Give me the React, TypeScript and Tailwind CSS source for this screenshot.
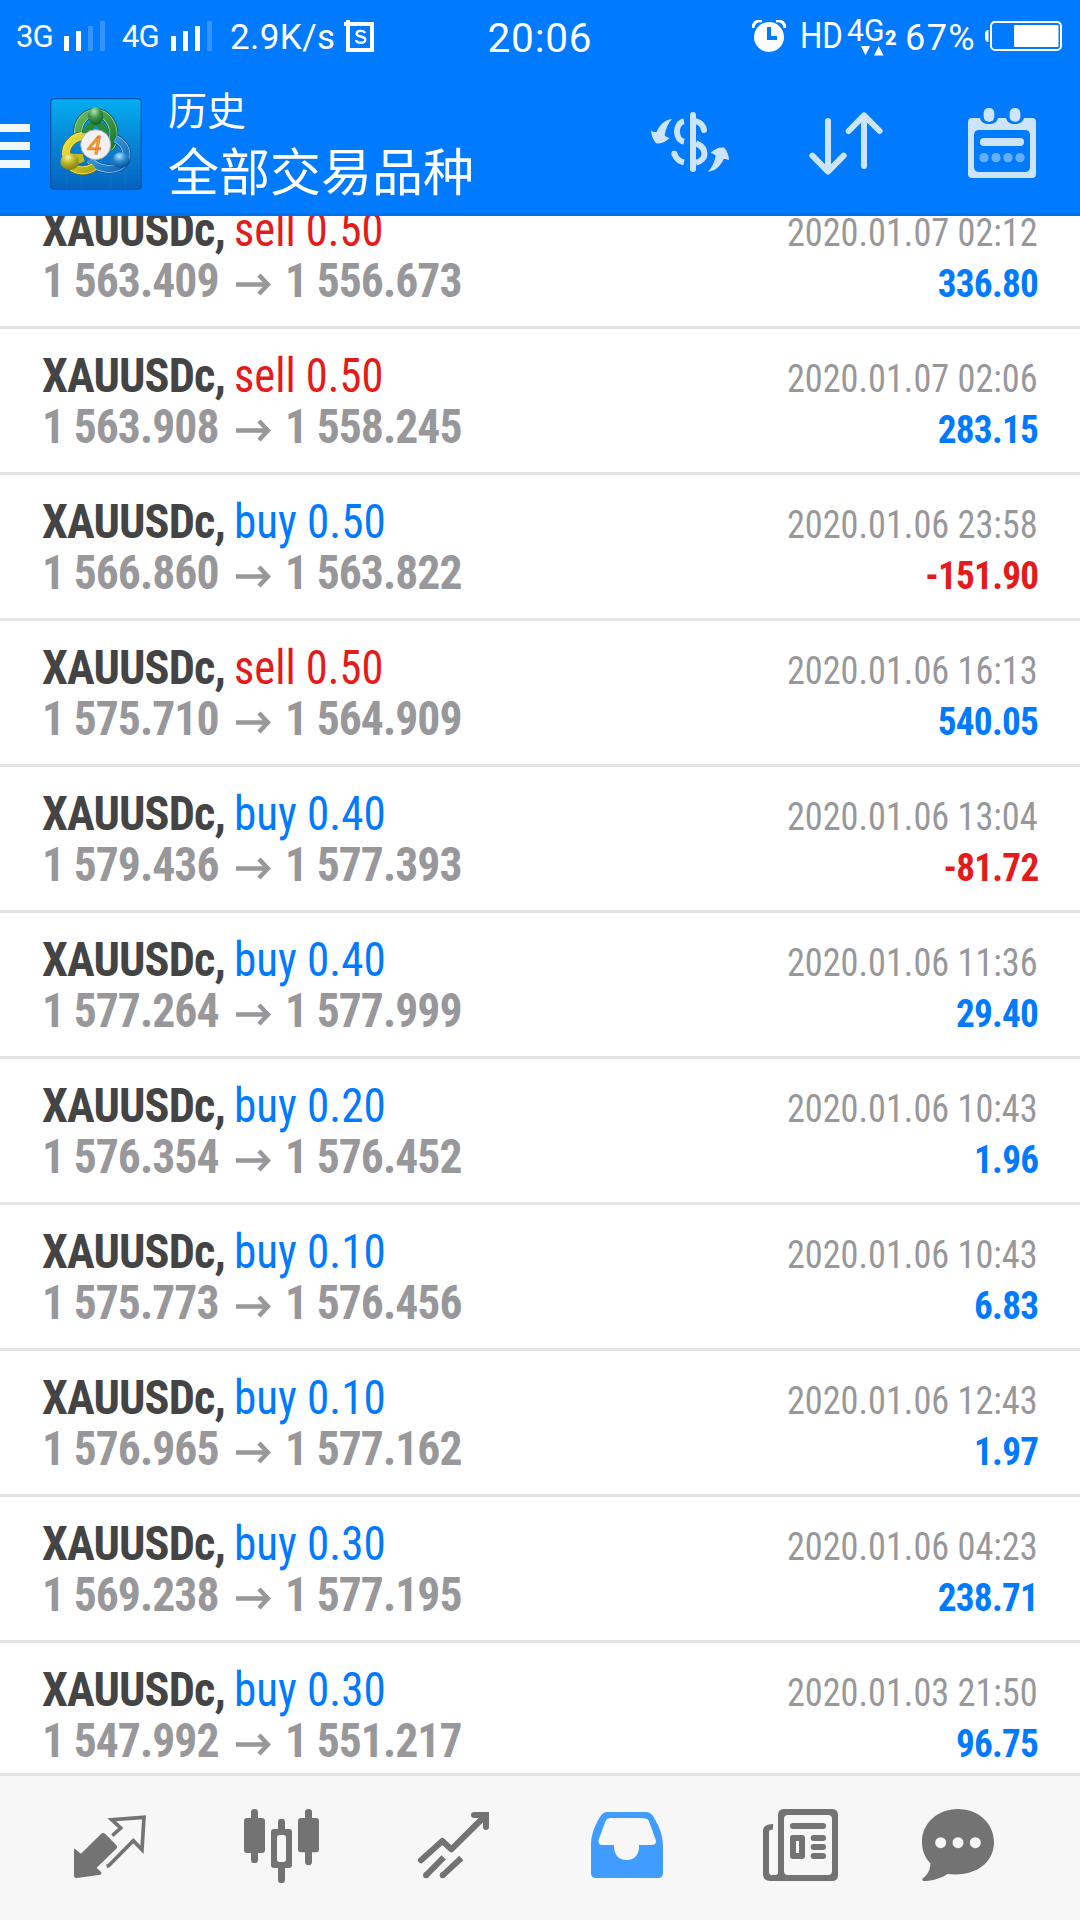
import type { ReactNode } from 'react'

type Deal = {
  type: 'buy' | 'sell'
  volume: string
  open: string
  close: string
  time: string
  profit: string
}

const deals: Deal[] = [
  { type: 'sell', volume: '0.50', open: '1 563.409', close: '1 556.673', time: '2020.01.07 02:12', profit: '336.80' },
  { type: 'sell', volume: '0.50', open: '1 563.908', close: '1 558.245', time: '2020.01.07 02:06', profit: '283.15' },
  { type: 'buy', volume: '0.50', open: '1 566.860', close: '1 563.822', time: '2020.01.06 23:58', profit: '-151.90' },
  { type: 'sell', volume: '0.50', open: '1 575.710', close: '1 564.909', time: '2020.01.06 16:13', profit: '540.05' },
  { type: 'buy', volume: '0.40', open: '1 579.436', close: '1 577.393', time: '2020.01.06 13:04', profit: '-81.72' },
  { type: 'buy', volume: '0.40', open: '1 577.264', close: '1 577.999', time: '2020.01.06 11:36', profit: '29.40' },
  { type: 'buy', volume: '0.20', open: '1 576.354', close: '1 576.452', time: '2020.01.06 10:43', profit: '1.96' },
  { type: 'buy', volume: '0.10', open: '1 575.773', close: '1 576.456', time: '2020.01.06 10:43', profit: '6.83' },
  { type: 'buy', volume: '0.10', open: '1 576.965', close: '1 577.162', time: '2020.01.06 12:43', profit: '1.97' },
  { type: 'buy', volume: '0.30', open: '1 569.238', close: '1 577.195', time: '2020.01.06 04:23', profit: '238.71' },
  { type: 'buy', volume: '0.30', open: '1 547.992', close: '1 551.217', time: '2020.01.03 21:50', profit: '96.75' }
]

const Signal = ({ level }: { level: number }) => (
  <svg width="42" height="30" viewBox="0 0 42 30" fill="#fff">
    {[0, 1, 2, 3].map((i) => (
      <rect key={i} x={i * 12} y={15 - i * 5} width="5" height={15 + i * 5} opacity={i < level ? 1 : 0.2} />
    ))}
  </svg>
)

const StatusBar = () => (
  <div className="grid h-[72px] grid-cols-[1fr_auto_1fr] items-center text-white whitespace-nowrap">
    <div className="flex items-center pl-[16px]">
      <span className="w-[48px] text-[31px] leading-none tracking-[-1px]">3G</span>
      <Signal level={2} />
      <span className="ml-[16px] w-[49px] text-[31px] leading-none tracking-[-1px]">4G</span>
      <Signal level={3} />
      <span className="ml-[17px] w-[114px] pt-[3px] text-[35px] leading-none tracking-[0.4px]">2.9K/s</span>
      <svg width="30" height="32" viewBox="0 0 90 96" fill="none" stroke="#fff">
        <path d="M12 12H84V90H12Z" strokeWidth="12" />
        <path d="M0 12H18M12 0V14" strokeWidth="12" />
        <path d="M63 39C60 31 38 30 38 41C38 53 64 46 64 59C64 72 38 70 36 60" strokeWidth="7" />
      </svg>
    </div>
    <span className="pt-[4px] text-[40.5px] leading-none tracking-[0.8px]">20:06</span>
    <div className="flex items-center justify-end pr-[18px]">
      <svg width="34" height="32" viewBox="0 0 34 32">
        <circle cx="17" cy="17" r="15" fill="#fff" />
        <path d="M1 8C1 3 5 0 10 1M24 1C29 0 33 3 33 8" stroke="#fff" strokeWidth="3" fill="none" />
        <path d="M17 7V18H25" stroke="#007aff" strokeWidth="4" fill="none" />
      </svg>
      <span className="ml-[14px] w-[47px] text-[36px] leading-none">
        <span className="inline-block origin-left scale-x-[0.87]">HD</span>
      </span>
      <div className="relative h-[56px] w-[50px]">
        <span className="inline-block origin-left scale-x-[0.94] pt-[6px] text-[32px] leading-none">4G</span>
        <span className="absolute top-[20px] left-[38px] text-[20px] leading-none font-black">2</span>
        <svg className="absolute top-[38px] left-[14px]" width="23" height="10" viewBox="0 0 23 10" fill="#fff">
          <path d="M0 0H9L4.5 9.500ZM13 9.500H22.500L17.750 0Z" />
        </svg>
      </div>
      <span className="ml-[8px] w-[80px] pt-[3px] text-[36px] leading-none tracking-[1.4px]">67%</span>
      <svg width="77" height="30" viewBox="0 0 77 30">
        <rect x="6" y="1" width="70" height="28" rx="4" fill="none" stroke="#fff" strokeWidth="2" />
        <path d="M3.500 9V21C1 21 0 19 0 17V13C0 11 1 9 3.500 9Z" fill="#fff" />
        <rect x="29" y="4" width="44.500" height="22" rx="1" fill="#fff" />
      </svg>
    </div>
  </div>
)

const AppLogo = () => (
  <svg className="ml-[20px] shrink-0" width="92" height="92" viewBox="0 0 276 276">
    <defs>
      <linearGradient id="tile" x1="0" y1="0" x2="0" y2="1">
        <stop offset="0" stopColor="#03aef2" />
        <stop offset="0.5" stopColor="#0784d6" />
        <stop offset="1" stopColor="#0563bd" />
      </linearGradient>
      <linearGradient id="green" x1="0" y1="0" x2="1" y2="1">
        <stop offset="0" stopColor="#68b868" />
        <stop offset="1" stopColor="#1c7a2c" />
      </linearGradient>
      <linearGradient id="yellow" x1="0" y1="0" x2="1" y2="1">
        <stop offset="0" stopColor="#f0e53c" />
        <stop offset="1" stopColor="#a9a411" />
      </linearGradient>
      <linearGradient id="blue" x1="0" y1="0" x2="1" y2="1">
        <stop offset="0" stopColor="#4fb2ea" />
        <stop offset="1" stopColor="#0b62b4" />
      </linearGradient>
      <radialGradient id="greenHead" cx="0.4" cy="0.25" r="0.8">
        <stop offset="0" stopColor="#b5e3b5" />
        <stop offset="0.45" stopColor="#3f9b4c" />
        <stop offset="1" stopColor="#0e5c22" />
      </radialGradient>
      <radialGradient id="yellowHead" cx="0.4" cy="0.25" r="0.8">
        <stop offset="0" stopColor="#f3f0a0" />
        <stop offset="0.45" stopColor="#bcb624" />
        <stop offset="1" stopColor="#77740a" />
      </radialGradient>
      <radialGradient id="blueHead" cx="0.4" cy="0.25" r="0.8">
        <stop offset="0" stopColor="#b4e2fb" />
        <stop offset="0.45" stopColor="#2a8cd4" />
        <stop offset="1" stopColor="#07468c" />
      </radialGradient>
    </defs>
    <rect x="2" y="2" width="272" height="272" rx="12" fill="url(#tile)" stroke="#0558a8" strokeWidth="4" />
    <path d="M50 4V272M94 4V272M182 4V272M226 4V272M4 50H272M4 226H272" stroke="#3fb4f0" strokeWidth="2" opacity="0.15" />
    <path d="M84 110C82 72 105 45 137 45C172 45 194 82 190 120C188 137 184 143 178 148" fill="none" stroke="#0c5a2a" strokeWidth="29" />
    <path d="M84 110C82 72 105 45 137 45C172 45 194 82 190 120C188 137 184 143 178 148" fill="none" stroke="#b2e2ac" strokeWidth="24" />
    <path d="M84 110C82 72 105 45 137 45C172 45 194 82 190 120C188 137 184 143 178 148" fill="none" stroke="url(#green)" strokeWidth="20" />
    <path d="M196 122C221 134 233 156 228 180C223 204 196 216 168 212C147 209 128 200 120 186" fill="none" stroke="#0a4f93" strokeWidth="28" />
    <path d="M196 122C221 134 233 156 228 180C223 204 196 216 168 212C147 209 128 200 120 186" fill="none" stroke="#94d2f6" strokeWidth="23" />
    <path d="M196 122C221 134 233 156 228 180C223 204 196 216 168 212C147 209 128 200 120 186" fill="none" stroke="url(#blue)" strokeWidth="19" />
    <path d="M108 112C72 114 47 138 48 168C49 196 67 216 96 217C113 217 124 212 132 206" fill="none" stroke="#777509" strokeWidth="28" />
    <path d="M108 112C72 114 47 138 48 168C49 196 67 216 96 217C113 217 124 212 132 206" fill="none" stroke="#f5f08c" strokeWidth="23" />
    <path d="M108 112C72 114 47 138 48 168C49 196 67 216 96 217C113 217 124 212 132 206" fill="none" stroke="url(#yellow)" strokeWidth="19" />
    <path d="M113 75L95 106H122L137 82L154 104H178L162 75Z" fill="#2a8a3c" />
    <path d="M66 168H98L104 190L76 202Z" fill="#c0b91f" />
    <path d="M186 174L214 168L222 200L178 198Z" fill="#1873c0" />
    <ellipse cx="137" cy="54" rx="23" ry="27" fill="url(#greenHead)" />
    <ellipse cx="59" cy="191" rx="28" ry="25" fill="url(#yellowHead)" />
    <ellipse cx="213" cy="186" rx="26" ry="23" fill="url(#blueHead)" />
    <circle cx="137" cy="140" r="45" fill="#f1f1f4" stroke="#a9a9ad" strokeWidth="3" />
    <text x="134" y="167" textAnchor="middle" fontFamily="Roboto" fontSize="78" fontStyle="italic" fill="#f7a63c" stroke="#e8801f" strokeWidth="2.5">
      4
    </text>
  </svg>
)

const Header = () => (
  <div className="flex h-[144px] items-start border-b-[3px] border-[#0070e6] text-white">
    <div className="mt-[52px] flex w-[30px] shrink-0 flex-col gap-[10px]">
      <div className="h-[8px] bg-[#f0f7ff]" />
      <div className="h-[8px] bg-[#f0f7ff]" />
      <div className="h-[8px] bg-[#f0f7ff]" />
    </div>
    <div className="mt-[26px]">
      <AppLogo />
    </div>
    <div className="mt-[11px] ml-[26px] flex-1 whitespace-nowrap">
      <div className="text-[39px] leading-[58px]">历史</div>
      <div className="text-[51px] leading-[66px]">全部交易品种</div>
    </div>
    <svg className="mt-[40px]" width="80" height="60" viewBox="90 96 240 180">
      <g fill="none" stroke="#cce4ff" strokeWidth="18">
        <path d="M219 105V267" strokeLinecap="round" />
        <path d="M192 124C164 129 164 180 192 185" />
        <path d="M228 124C240 127 250 136 252 150" strokeLinecap="round" />
        <path d="M228 190C262 203 262 240 228 248" />
        <path d="M164 222C168 236 178 244 192 247" />
        <path d="M163 221V222" strokeLinecap="round" />
      </g>
      <path d="M156 117C135 119 119 134 110 156C104 157 98 155 93 152C94 166 99 179 108 190C121 192 135 187 149 174C142 173 137 170 134 166C137 147 144 130 156 117Z" fill="#cce4ff" />
      <path d="M264 275C285 273 301 260 311 237C317 236 322 238 327 241C327 227 322 214 313 203C299 200 284 206 271 219C278 220 283 223 287 227C284 246 276 262 264 275Z" fill="#cce4ff" />
    </svg>
    <svg className="mt-[40px] ml-[79px]" width="74" height="63" viewBox="567 96 222 189">
      <path
        d="M624 123V274M577 227L624 275L671 227M732 258V107M686 153L732 106L779 153"
        fill="none"
        stroke="#cce4ff"
        strokeWidth="18"
        strokeLinecap="round"
        strokeLinejoin="round"
      />
    </svg>
    <svg className="mt-[36px] mr-[44px] ml-[85px]" width="68" height="70" viewBox="1044 84 204 210">
      <path
        fillRule="evenodd"
        fill="#cce4ff"
        d="M1056 114H1080C1083 126 1092 132 1107 132C1122 132 1131 126 1134 114H1158C1161 126 1170 132 1185 132C1200 132 1209 126 1212 114H1236Q1248 114 1248 126V282Q1248 294 1236 294H1056Q1044 294 1044 282V126Q1044 114 1056 114ZM1078 150Q1062 150 1062 166V260Q1062 276 1078 276H1214Q1230 276 1230 260V166Q1230 150 1214 150Z"
      />
      <rect x="1091" y="84" width="32" height="41" rx="15" fill="#cce4ff" />
      <rect x="1169" y="84" width="32" height="41" rx="15" fill="#cce4ff" />
      <rect x="1080" y="174" width="132" height="24" rx="11" fill="#cce4ff" />
      {[1092, 1128, 1164, 1200].map((cx) => (
        <circle key={cx} cx={cx} cy="233" r="14" fill="#66afff" />
      ))}
    </svg>
  </div>
)

const DealRow = ({ deal }: { deal: Deal }) => (
  <div className="h-[146px] shrink-0 border-b-[3px] border-[#e4e4e4] pt-[21px] pr-[42px] pl-[42px] leading-[51px] whitespace-nowrap">
    <div className="flex h-[51px] items-baseline justify-between">
      <div className="flex items-baseline text-[48px]">
        <span className="w-[192px] origin-left scale-x-[0.965] font-bold tracking-[-0.9px] text-[#444]">XAUUSDc,</span>
        <span
          className={`origin-left ${deal.type === 'buy' ? 'scale-x-[0.938] text-[#007aff]' : 'scale-x-[0.928] text-[#e41b1b]'}`}
        >
          {deal.type} {deal.volume}
        </span>
      </div>
      <div className="origin-right scale-x-[0.93] text-[39px] text-[#98989b]">{deal.time}</div>
    </div>
    <div className="flex h-[51px] items-baseline justify-between">
      <div className="flex items-baseline text-[48px] font-bold text-[#98989b]">
        <span className="w-[194px] origin-left scale-x-[0.95] tracking-[-1px]">{deal.open}</span>
        <svg className="mt-[18px] mr-[14px] self-start" width="35" height="23" viewBox="0 0 35 23">
          <path d="M0 11.500H31M23 2L32 11.500L23 21" fill="none" stroke="#98989b" strokeWidth="4.5" />
        </svg>
        <span className="origin-left scale-x-[0.95] tracking-[-1px]">{deal.close}</span>
      </div>
      <div
        className={`origin-right scale-x-[0.955] text-[39px] font-bold tracking-[-0.8px] ${deal.profit.startsWith('-') ? 'text-[#e41b1b]' : 'text-[#007aff]'}`}
      >
        {deal.profit}
      </div>
    </div>
  </div>
)

const NavIcon = ({ x, className, children }: { x: number; className: string; children: ReactNode }) => (
  <svg className={className} width="80" height="80" viewBox={`${x} 132 240 240`} fill="#737373">
    {children}
  </svg>
)

const BottomNav = () => (
  <div className="flex h-[147px] shrink-0 items-start border-t-[3px] border-[#e4e4e4] bg-[#f7f7f7] pt-[28px]">
    <NavIcon x={90} className="ml-[70px]">
      <path d="M102 266Q105 266 108 269L123 281L182 223Q189 216 196 222L228 254Q235 261 228 267L170 323L184 337Q186 343 181 344L111 354Q102 355 102 346Z" />
      <path
        d="M217 227L242 204L215 179L312 172L306 269L280 242L206 317L200 319"
        fill="none"
        stroke="#737373"
        strokeWidth="11"
      />
    </NavIcon>
    <NavIcon x={603} className="ml-[91px]">
      <rect x="633" y="147" width="21" height="162" rx="10" />
      <rect x="612" y="174" width="63" height="105" rx="9" />
      <rect x="714" y="176" width="21" height="50" rx="10" />
      <rect x="714" y="300" width="21" height="69" rx="10" />
      <rect x="693" y="207" width="63" height="117" rx="9" />
      <rect x="711" y="225" width="27" height="81" rx="8" fill="#f7f7f7" />
      <rect x="795" y="147" width="21" height="168" rx="10" />
      <rect x="774" y="174" width="63" height="103" rx="9" />
    </NavIcon>
    <NavIcon x={1119} className="ml-[92px]">
      <g fill="none" stroke="#737373" strokeWidth="18">
        <path d="M1143 301L1207 243L1234 268L1332 171" strokeLinecap="round" strokeLinejoin="round" />
        <path d="M1302 165H1338V201" strokeLinecap="round" />
        <path d="M1329 156H1338Q1347 156 1347 165V174L1329 180Z" fill="#737373" stroke="none" />
        <path d="M1158 346L1211 292M1208 346L1264 294" />
      </g>
      <circle cx="1158" cy="346" r="9" />
      <circle cx="1208" cy="346" r="9" />
    </NavIcon>
    <NavIcon x={141} className="ml-[94px]">
      <path
        fill="#409cff"
        fillRule="evenodd"
        d="M203 156H319Q330 156 336 164C354 190 369 222 369 260V339Q369 354 354 354H168Q153 354 153 339V252C153 222 168 188 184 165Q191 156 203 156ZM213 174Q201 174 197 182L176 239Q173 255 187 255H222C221 282 235 300 260 300C284 300 299 282 297 255H334Q349 255 348 242L327 184Q323 174 304 174Z"
      />
    </NavIcon>
    <NavIcon x={663} className="ml-[94px]">
      <path
        fillRule="evenodd"
        d="M732 147H876Q894 147 894 165V345Q894 363 876 363H690Q669 363 669 342V212Q669 192 700 192L698 209Q687 208 687 216V335Q687 345 697 345H706Q714 345 714 337V165Q714 147 732 147ZM744 165Q732 165 732 177V333Q732 345 744 345H864Q876 345 876 333V177Q876 165 864 165Z"
      />
      <rect x="750" y="189" width="108" height="18" rx="9" />
      <path fillRule="evenodd" d="M759 225H786Q795 225 795 234V288Q795 297 786 297H759Q750 297 750 288V234Q750 225 759 225ZM768 243V279H777V243Z" />
      <rect x="812" y="225" width="46" height="18" rx="9" />
      <rect x="812" y="252" width="46" height="18" rx="9" />
      <rect x="812" y="279" width="46" height="18" rx="9" />
    </NavIcon>
    <NavIcon x={1134} className="ml-[77px]">
      <path d="M1254 147C1316 147 1362 191 1362 247C1362 306 1310 352 1223 342C1203 355 1178 363 1151 363Q1145 362 1147 356C1162 345 1171 331 1171 310C1153 290 1146 270 1146 245C1146 190 1193 147 1254 147Z" />
      {[1202, 1254, 1306].map((cx) => (
        <circle key={cx} cx={cx} cy="248" r="16.5" fill="#f7f7f7" />
      ))}
    </NavIcon>
  </div>
)

const App = () => {
  return (
    <div className="flex h-[1920px] w-[1080px] flex-col overflow-hidden bg-white font-['Roboto','Noto_Sans_CJK_SC',sans-serif]">
      <div className="shrink-0 bg-[#007aff]">
        <StatusBar />
        <Header />
      </div>
      <div className="min-h-0 flex-1 overflow-hidden font-['Roboto_Condensed','Roboto',sans-serif] [font-stretch:75%]">
        {/* list is scrolled a little, so the first row starts under the header */}
        <div className="-mt-[33px] flex flex-col">
          {deals.map((deal, i) => (
            <DealRow key={i} deal={deal} />
          ))}
        </div>
      </div>
      <BottomNav />
    </div>
  )
}

export default App
